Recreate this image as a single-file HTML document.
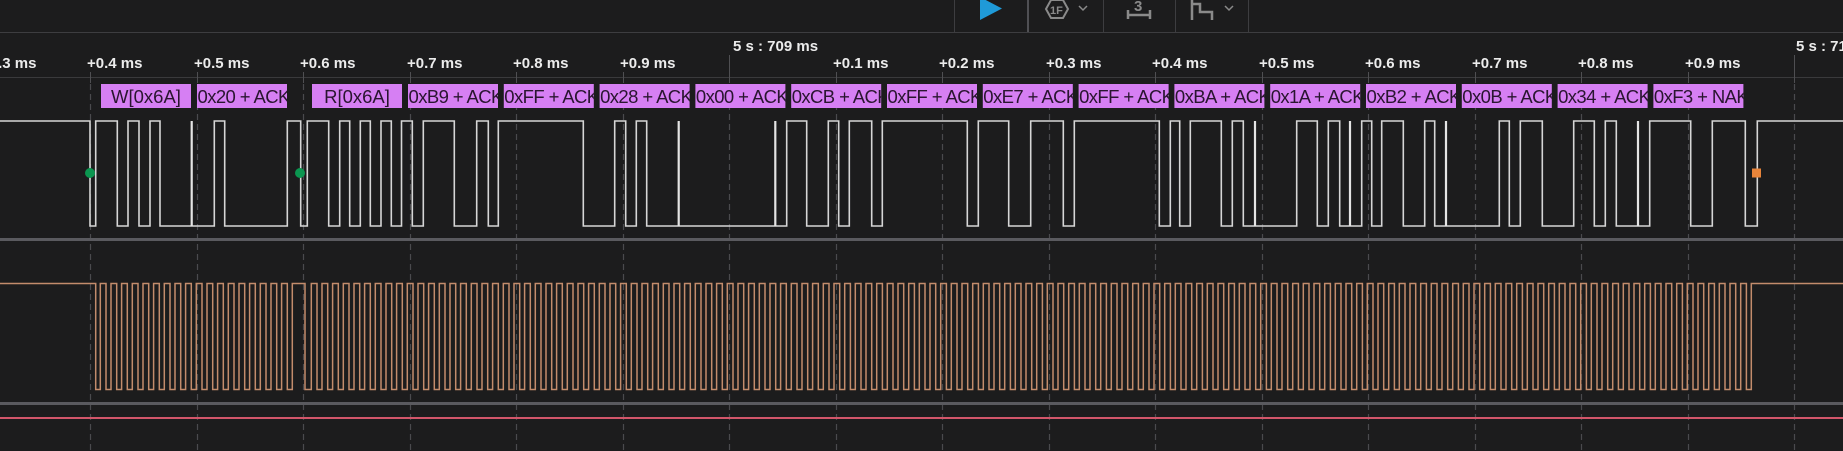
<!DOCTYPE html>
<html><head><meta charset="utf-8">
<style>
html,body{margin:0;padding:0;background:#1c1c1d;width:1843px;height:451px;overflow:hidden}
svg{display:block}
.tl{font-family:"Liberation Sans",sans-serif;font-weight:bold;font-size:15px;fill:#ececec}
.bx{font-family:"Liberation Sans",sans-serif;font-size:18.5px;fill:#2a1530}
.bd{letter-spacing:-0.6px}
</style></head><body>
<svg id="s" width="1843" height="451" xmlns="http://www.w3.org/2000/svg">
<rect width="1843" height="451" fill="#1c1c1d"/>
<line x1="0" y1="32.5" x2="1843" y2="32.5" stroke="#3d3d40" stroke-width="1"/>
<line x1="954.5" y1="0" x2="954.5" y2="32" stroke="#3d3d40"/>
<line x1="1028" y1="0" x2="1028" y2="32" stroke="#505054" stroke-width="2"/>
<line x1="1103.5" y1="0" x2="1103.5" y2="32" stroke="#3d3d40"/>
<line x1="1175.5" y1="0" x2="1175.5" y2="32" stroke="#3d3d40"/>
<line x1="1248.5" y1="0" x2="1248.5" y2="32" stroke="#3d3d40"/>
<polygon points="980,-3 980,20 1002,8.5" fill="#1f9ad8"/>
<polygon points="1046,9 1051,0 1063,0 1068,9 1063,18 1051,18" fill="none" stroke="#8a8a8a" stroke-width="2"/>
<text x="1050" y="14" font-family="Liberation Sans,sans-serif" font-size="11" font-weight="bold" fill="#8a8a8a">1F</text>
<polyline points="1079,6 1083,10 1087,6" fill="none" stroke="#8a8a8a" stroke-width="1.5"/>
<text x="1134" y="11" font-family="Liberation Sans,sans-serif" font-size="15" font-weight="bold" fill="#8a8a8a">3</text>
<path d="M1128 10 V19 M1128 15 H1150 M1150 10 V19" fill="none" stroke="#8a8a8a" stroke-width="2.5"/>
<path d="M1192 0 V20 M1192 4 H1200 V12 H1212 V20" fill="none" stroke="#8a8a8a" stroke-width="2.5"/>
<polyline points="1225,6 1229,10 1233,6" fill="none" stroke="#8a8a8a" stroke-width="1.5"/>
<line x1="0" y1="77.5" x2="1843" y2="77.5" stroke="#3a3a3c"/>
<g id="grid"></g>
<g id="labels"></g>
<rect x="0" y="238" width="1843" height="3" fill="#5a5a5f"/>
<rect x="0" y="402" width="1843" height="3" fill="#5a5a5f"/>
<rect x="0" y="417" width="1843" height="2" fill="#d2566a"/>
<path id="sda" fill="none" stroke="#d6d6d6" stroke-width="1.6"/>
<g id="spk"></g>
<path id="scl" fill="none" stroke="#c38c6c" stroke-width="1.5"/>
<circle cx="90" cy="173" r="5" fill="#0b9650"/>
<circle cx="300" cy="173" r="5" fill="#0b9650"/>
<rect x="1752" y="168.5" width="9" height="9" fill="#e8843a"/>
</svg>
<script>
var NS="http://www.w3.org/2000/svg";
function el(t,a,p,txt){var e=document.createElementNS(NS,t);for(var k in a)e.setAttribute(k,a[k]);if(txt!=null)e.textContent=txt;document.getElementById(p).appendChild(e);return e;}
var names={"-1":"+0.3 ms",0:"+0.4 ms",1:"+0.5 ms",2:"+0.6 ms",3:"+0.7 ms",4:"+0.8 ms",5:"+0.9 ms",7:"+0.1 ms",8:"+0.2 ms",9:"+0.3 ms",10:"+0.4 ms",11:"+0.5 ms",12:"+0.6 ms",13:"+0.7 ms",14:"+0.8 ms",15:"+0.9 ms"};
for(var k=-1;k<=16;k++){
  var x=Math.round(90+106.5*k)+0.5;
  var big=(k==6||k==16);
  el("line",{x1:x,y1:big?55:72,x2:x,y2:83,stroke:"#4f4f52","stroke-width":1},"grid");
  el("line",{x1:x,y1:84,x2:x,y2:451,stroke:"#4a4a4d","stroke-width":1.2,"stroke-dasharray":"6,4"},"grid");
  if(names[k]) el("text",{x:x-3.5,y:68,"class":"tl"},"grid",names[k]);
}
el("text",{x:733,y:51,"class":"tl"},"grid","5 s : 709 ms");
el("text",{x:1796,y:51,"class":"tl"},"grid","5 s : 710 ms");
var boxes=[[101,"W[0x6A]",1],[197,"0x20 + ACK",0],[312,"R[0x6A]",1]];
var data=["0xB9","0xFF","0x28","0x00","0xCB","0xFF","0xE7","0xFF","0xBA","0x1A","0xB2","0x0B","0x34","0xF3"];
for(var j=0;j<data.length;j++) boxes.push([408+95.8*j,data[j]+(j==13?" + NAK":" + ACK"),0]);
var defs=el("defs",{},"labels");
boxes.forEach(function(b,i){
  var cp=document.createElementNS(NS,"clipPath");cp.setAttribute("id","c"+i);
  var r=document.createElementNS(NS,"rect");r.setAttribute("x",b[0]);r.setAttribute("y",84);r.setAttribute("width",90);r.setAttribute("height",24);cp.appendChild(r);defs.appendChild(cp);
  el("rect",{x:b[0],y:84,width:90,height:24,fill:"#d67ff3"},"labels");
  el("text",{x:b[2]?b[0]+45:b[0]+0.5,y:103,"class":b[2]?"bx":"bx bd","clip-path":"url(#c"+i+")","text-anchor":b[2]?"middle":"start"},"labels",b[1]);
});
var H=121,L=226;
var tr=[90,95.7,117.3,128,139,150,160,214.3,224.7,287.3,300.7,307.3,328.7,339.7,349.7,360.3,370.3,381,391.3,401.5,412.3,423.3,454.3,476.7,488.3,498.3,583.3,614.7,625.7,636.3,646.7,786.7,806.7,828.3,838.7,849.3,871.7,882.3,967.3,978.3,1008.7,1030.7,1063.3,1074.3,1159.3,1170.3,1179.7,1190.3,1221.3,1232.3,1243.3,1296.7,1317.3,1328.3,1339.7,1361.7,1371.7,1381.7,1403.3,1424.7,1434.7,1499.3,1509.3,1520.3,1542.3,1573.7,1594.3,1605.3,1616.3,1649.7,1690.7,1712.3,1745.3,1757.3];
var d="M0 "+H,lv=H;
tr.forEach(function(x){d+=" H"+x;lv=(lv==H?L:H);d+=" V"+lv;});
d+=" H1843";
document.getElementById("sda").setAttribute("d",d);
[191.7,678.7,775.3,1255,1350,1446,1638].forEach(function(x){
  el("line",{x1:x,y1:H,x2:x,y2:L,stroke:"#e4e4e4","stroke-width":2.2},"spk");
});
var SH=283.5,SL=389.5,T=10.667;
var s="M0 "+SH+" H95.7 V"+SL;
for(var n=0;n<18;n++){var r=100.3+T*n;s+=" H"+r.toFixed(1)+" V"+SH+" H"+(r+5.7).toFixed(1)+" V"+SL;}
s+=" H292.3 V"+SH+" H305 V"+SL;
for(var n=0;n<135;n++){var r=311.3+T*n;s+=" H"+r.toFixed(1)+" V"+SH+" H"+(r+5.7).toFixed(1)+" V"+SL;}
s+=" H1751.3 V"+SH+" H1843";
document.getElementById("scl").setAttribute("d",s);
</script>
</body></html>
